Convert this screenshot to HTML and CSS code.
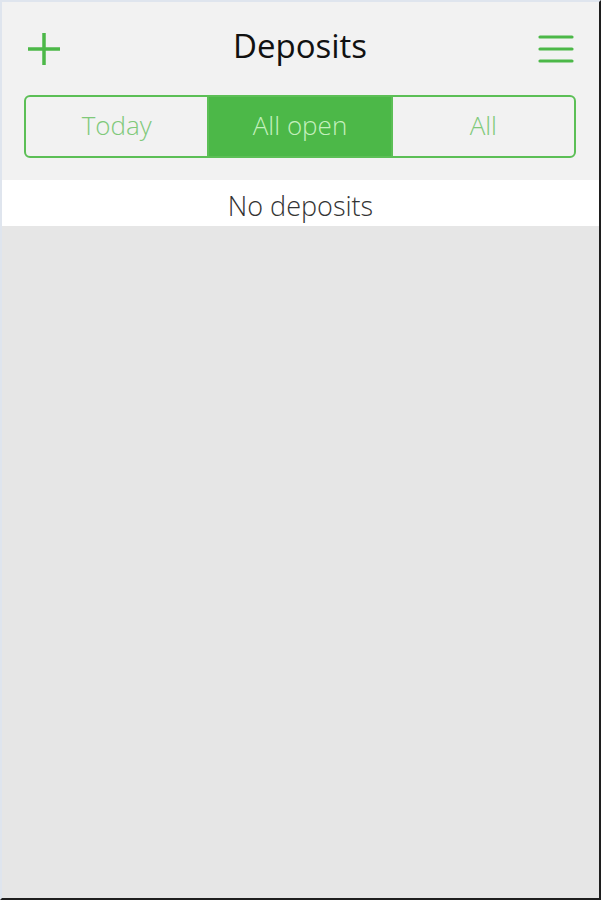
FILE: index.html
```html
<!DOCTYPE html>
<html lang="en">
<head>
    <meta charset="UTF-8">
    <title>Deposits</title>
    <link rel="stylesheet" href="styles.css">
</head>
<body>
    <div class="frame">
        <div class="header">
            <div class="topbar">
                <svg class="icon" width="36" height="36" viewBox="0 0 36 36">
                    <path d="M18 2V34M2 18H34" stroke="#4cb848" stroke-width="3.5" fill="none"/>
                </svg>
                <h1 class="title">Deposits</h1>
                <svg class="icon" width="36" height="36" viewBox="0 0 36 36">
                    <path d="M2 6H34M2 18H34M2 30H34" stroke="#4cb848" stroke-width="3.2" stroke-linecap="round" fill="none"/>
                </svg>
            </div>
            <div class="tabs">
                <div class="tab">Today</div>
                <div class="tab active">All open</div>
                <div class="tab">All</div>
            </div>
        </div>
        <div class="empty">No deposits</div>
    </div>
</body>
</html>
```

FILE: styles.css
```css
* {
    margin: 0;
    padding: 0;
    box-sizing: border-box;
}
body {
    font-family: "Open Sans", "Liberation Sans", sans-serif;
}
.frame {
    width: 601px;
    height: 900px;
    background: #e6e6e6;
    border-left: 2px solid #dfe5ee;
    border-top: 2px solid #dfe5ee;
    border-right: 2px solid #1e1e1e;
    border-bottom: 2px solid #1e1e1e;
}
.header {
    background: #f2f2f2;
    padding: 0 23px 22px 22px;
}
.topbar {
    height: 93px;
    display: flex;
    align-items: center;
    justify-content: space-between;
    padding: 0 2px 0 2px;
}
.title {
    font-size: 33px;
    font-weight: 400;
    color: #111;
    margin-top: -6px;
}
.tabs {
    display: flex;
    height: 63px;
    border: 2px solid #5cbf56;
    border-radius: 6px;
    overflow: hidden;
}
.tab {
    flex: 1;
    display: flex;
    align-items: center;
    justify-content: center;
    padding-bottom: 4px;
    font-size: 26px;
    font-weight: 300;
    color: #80c97a;
}
.tab.active {
    background: #4cb848;
    color: #c4f0be;
    border-left: 2px solid #5cbf56;
    border-right: 2px solid #5cbf56;
}
.empty {
    background: #fff;
    height: 46px;
    display: flex;
    align-items: center;
    justify-content: center;
    padding-top: 5px;
    font-size: 27px;
    font-weight: 300;
    color: #333;
}
```
